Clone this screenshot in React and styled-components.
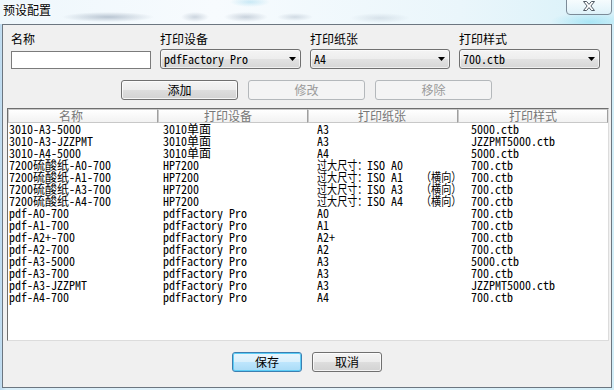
import React from 'react';
import styled, { createGlobalStyle, css } from 'styled-components';

const GlobalStyle = createGlobalStyle`
  html, body { margin: 0; padding: 0; width: 614px; height: 390px; overflow: hidden; }
  body {
    background: #cfe6f5;
    font-family: "Noto Sans CJK SC", sans-serif;
    font-size: 12px;
    color: #000;
  }
`;

const MONO = `"Noto Sans Mono CJK SC", "Noto Sans CJK SC", monospace`;
const UI = `"Noto Sans CJK SC", "Noto Sans", sans-serif`;

const Window = styled.div`
  width: 614px;
  height: 390px;
  display: flex;
  flex-direction: column;
  background: linear-gradient(90deg, #bcd9ef 0px, #d9eef9 6px, #e7f5fc 50%, #d3eef8 100%);
`;

const TitleBar = styled.div`
  flex: none;
  height: 24px;
  display: flex;
  align-items: flex-start;
  background:
    radial-gradient(46px 5px at 108px 17px, rgba(105, 125, 150, 0.42), transparent),
    radial-gradient(14px 5px at 195px 17px, rgba(105, 125, 150, 0.3), transparent),
    radial-gradient(22px 5px at 246px 17px, rgba(105, 125, 150, 0.32), transparent),
    radial-gradient(18px 4px at 295px 17px, rgba(105, 125, 150, 0.25), transparent),
    radial-gradient(30px 5px at 380px 18px, rgba(105, 125, 150, 0.18), transparent),
    radial-gradient(20px 5px at 250px 2px, rgba(120, 200, 230, 0.35), transparent),
    radial-gradient(40px 10px at 590px 22px, rgba(110, 215, 240, 0.45), transparent),
    linear-gradient(90deg, #eef7fc 0%, #f7fbfe 35%, #eaf6fb 75%, #d8f1f9 100%);
`;

const Title = styled.div`
  padding: 3px 0 0 3px;
  font: 12px/14px ${UI};
  color: #000;
  text-shadow: 0 0 6px #fff, 0 0 3px #fff;
`;

const CloseButton = styled.div`
  margin: -1px 2px 0 auto;
  width: 46px;
  height: 16px;
  box-sizing: border-box;
  border: 1px solid #7c8b98;
  border-radius: 0 0 4px 4px;
  background: linear-gradient(rgba(255, 255, 255, 0.75), rgba(225, 242, 249, 0.6));
  display: flex;
  justify-content: center;
  padding-top: 1px;
`;

const Client = styled.div`
  margin: 0 2px;
  height: 364px;
  box-sizing: border-box;
  border: 1px solid #6c7680;
  background: #f0f0f0;
  display: flex;
  flex-direction: column;
  padding: 7px 0 15px 0;
`;

const FieldGrid = styled.div`
  display: grid;
  grid-template-columns: 140px 141px 140px 141px;
  column-gap: 9px;
  padding-left: 8px;
`;

const Field = styled.div`
  display: flex;
  flex-direction: column;
`;

const Label = styled.label`
  height: 14px;
  font: 12px/14px ${UI};
  margin-bottom: 3px;
`;

const TextBox = styled.input`
  box-sizing: border-box;
  width: 140px;
  height: 18px;
  margin: 2px 0 0 0;
  border: 1px solid #7b7b7b;
  background: #fff;
  padding: 0 2px;
  outline: none;
`;

const Combo = styled.div`
  box-sizing: border-box;
  height: 20px;
  border: 1px solid #707070;
  border-radius: 3px;
  background: linear-gradient(#f4f4f4, #ededed 50%, #e2e2e2 50%, #d6d6d6);
  box-shadow: inset 0 0 0 1px rgba(255, 255, 255, 0.6);
  display: flex;
  align-items: center;
  padding: 0 3px 0 3px;
  font: 12px/18px ${MONO};
  white-space: pre;
`;

const ComboArrow = styled.svg`
  margin-left: auto;
  flex: none;
`;

const ButtonRow = styled.div`
  display: flex;
  gap: 10px;
  padding-left: 118px;
  margin-top: 11px;
`;

const Button = styled.button`
  box-sizing: border-box;
  width: ${p => p.$w}px;
  height: 20px;
  padding: 0;
  margin: 0;
  font: 12px/16px ${UI};
  color: #000;
  border: 1px solid #707070;
  border-radius: 3px;
  background: linear-gradient(#f4f4f4, #ececec 50%, #dedede 50%, #d2d2d2);
  box-shadow: inset 0 0 0 1px rgba(255, 255, 255, 0.75);
  ${p => p.$primary && css`
    border-color: #3c7fb1;
    background: linear-gradient(#eaf6fd, #d9f0fc 50%, #bee6fd 50%, #a9dbf6);
    box-shadow: inset 0 0 0 1px #5ccdf6;
  `}
  ${p => p.disabled && css`
    border-color: #b4b8bb;
    background: #f4f4f4;
    color: #9a9a9a;
    box-shadow: none;
  `}
`;

const List = styled.div`
  margin: 8px 0 0 4px;
  width: 602px;
  height: 233px;
  box-sizing: border-box;
  border: 1px solid;
  border-color: #6e6e6e #dcdcdc #dcdcdc #6e6e6e;
  background: #fff;
  overflow: hidden;
`;

const HeaderRow = styled.div`
  display: flex;
  height: 14px;
`;

const HeaderCell = styled.div`
  width: 150px;
  box-sizing: border-box;
  border: 1px solid #c8c8c8;
  border-right-color: #9f9f9f;
  background: linear-gradient(#ffffff, #f2f2f2);
  text-align: center;
  padding-right: ${p => p.$pad || 0}px;
  color: #777;
  font: 12px/12px ${UI};
`;

const Rows = styled.div`
  padding-left: 1px;
  font: 12px/12px ${MONO};
`;

const Row = styled.div`
  display: grid;
  grid-template-columns: 154px 154px 154px auto;
  height: 12px;
`;

const Cell = styled.div`
  white-space: pre;
`;

/* CJK run drawn condensed, as the reference's paper-size column shows it */
const Narrow = styled.span`
  display: inline-block;
  transform: scaleX(0.84);
  transform-origin: left center;
  margin-right: ${p => -2 * p.$n}px;
`;

const Footer = styled.div`
  display: flex;
  justify-content: center;
  gap: 10px;
  margin-top: 11px;
`;

const CJK = /([\u3000-\u303f\u3400-\u9fff\uff00-\uffef]+)/;

function Compact({ text }) {
  return text.split(CJK).map((part, i) =>
    i % 2 === 1
      ? <Narrow key={i} $n={part.length}>{part}</Narrow>
      : <React.Fragment key={i}>{part}</React.Fragment>
  );
}

const rows = [
  ['3010-A3-5000', '3010单面', 'A3', '5000.ctb'],
  ['3010-A3-JZZPMT', '3010单面', 'A3', 'JZZPMT5000.ctb'],
  ['3010-A4-5000', '3010单面', 'A4', '5000.ctb'],
  ['7200硫酸纸-A0-700', 'HP7200', '过大尺寸：ISO A0', '700.ctb'],
  ['7200硫酸纸-A1-700', 'HP7200', '过大尺寸：ISO A1   （横向）', '700.ctb'],
  ['7200硫酸纸-A3-700', 'HP7200', '过大尺寸：ISO A3   （横向）', '700.ctb'],
  ['7200硫酸纸-A4-700', 'HP7200', '过大尺寸：ISO A4   （横向）', '700.ctb'],
  ['pdf-A0-700', 'pdfFactory Pro', 'A0', '700.ctb'],
  ['pdf-A1-700', 'pdfFactory Pro', 'A1', '700.ctb'],
  ['pdf-A2+-700', 'pdfFactory Pro', 'A2+', '700.ctb'],
  ['pdf-A2-700', 'pdfFactory Pro', 'A2', '700.ctb'],
  ['pdf-A3-5000', 'pdfFactory Pro', 'A3', '5000.ctb'],
  ['pdf-A3-700', 'pdfFactory Pro', 'A3', '700.ctb'],
  ['pdf-A3-JZZPMT', 'pdfFactory Pro', 'A3', 'JZZPMT5000.ctb'],
  ['pdf-A4-700', 'pdfFactory Pro', 'A4', '700.ctb'],
];

function Arrow() {
  return (
    <ComboArrow width="8" height="4" viewBox="0 0 8 4">
      <polygon points="0,0 7,0 3.5,4" fill="#000" />
    </ComboArrow>
  );
}

function Select({ value }) {
  return (
    <Combo>
      <span>{value}</span>
      <Arrow />
    </Combo>
  );
}

export default function App() {
  return (
    <>
      <GlobalStyle />
      <Window>
        <TitleBar>
          <Title>预设配置</Title>
          <CloseButton>
            <svg width="12" height="10" viewBox="0 0 12 10">
              <path
                d="M0.5,0.5 H3.6 L6,3.4 L8.4,0.5 H11.5 L7.9,5 L11.5,9.5 H8.4 L6,6.6 L3.6,9.5 H0.5 L4.1,5 Z"
                fill="#fff"
                stroke="#505a64"
                strokeWidth="1"
                strokeLinejoin="round"
              />
            </svg>
          </CloseButton>
        </TitleBar>
        <Client>
          <FieldGrid>
            <Field>
              <Label>名称</Label>
              <TextBox defaultValue="" />
            </Field>
            <Field>
              <Label>打印设备</Label>
              <Select value="pdfFactory Pro" />
            </Field>
            <Field>
              <Label>打印纸张</Label>
              <Select value="A4" />
            </Field>
            <Field>
              <Label>打印样式</Label>
              <Select value="700.ctb" />
            </Field>
          </FieldGrid>
          <ButtonRow>
            <Button $w={117}>添加</Button>
            <Button $w={117} disabled>修改</Button>
            <Button $w={117} disabled>移除</Button>
          </ButtonRow>
          <List>
            <HeaderRow>
              <HeaderCell $pad={24}>名称</HeaderCell>
              <HeaderCell $pad={10}>打印设备</HeaderCell>
              <HeaderCell $pad={2}>打印纸张</HeaderCell>
              <HeaderCell>打印样式</HeaderCell>
            </HeaderRow>
            <Rows>
              {rows.map((r, i) => (
                <Row key={i}>
                  <Cell>{r[0]}</Cell>
                  <Cell>{r[1]}</Cell>
                  <Cell><Compact text={r[2]} /></Cell>
                  <Cell>{r[3]}</Cell>
                </Row>
              ))}
            </Rows>
          </List>
          <Footer>
            <Button $w={70} $primary>保存</Button>
            <Button $w={70}>取消</Button>
          </Footer>
        </Client>
      </Window>
    </>
  );
}
